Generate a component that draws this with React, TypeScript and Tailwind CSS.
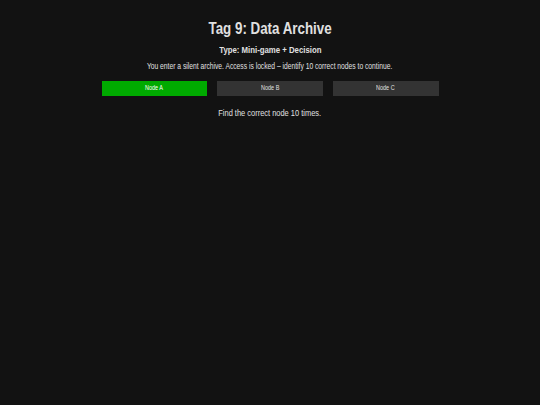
import React from "react";

function T({ children }: { children: React.ReactNode }) {
  return <span className="inline-block scale-x-[0.82] whitespace-nowrap">{children}</span>;
}

export default function App() {
  return (
    <div className="min-h-[405px] w-full bg-[#121212] text-[#e0e0e0]" style={{ fontFamily: '"Liberation Sans", Arial, sans-serif' }}>
      <div className="mx-auto flex w-[337px] flex-col items-center pt-[19px] text-center">
        <h1 className="text-[16.3px] font-bold leading-[18px]"><T>Tag 9: Data Archive</T></h1>
        <h2 className="mt-[7px] text-[9.5px] font-bold leading-[11px]"><T>Type: Mini-game + Decision</T></h2>
        <p className="mt-[6.7px] text-[8.2px] leading-[10px]"><T>You enter a silent archive. Access is locked – identify 10 correct nodes to continue.</T></p>
        <div className="mt-[9.6px] flex w-full gap-[10px]">
          <button className="h-[14.5px] flex-1 bg-[#00aa00] text-[6.7px] leading-[14.5px] text-white"><T>Node A</T></button>
          <button className="h-[14.5px] flex-1 bg-[#333333] text-[6.7px] leading-[14.5px] text-[#e0e0e0]"><T>Node B</T></button>
          <button className="h-[14.5px] flex-1 bg-[#333333] text-[6.7px] leading-[14.5px] text-[#e0e0e0]"><T>Node C</T></button>
        </div>
        <p className="mt-[12.5px] text-[9.1px] leading-[11px]"><T>Find the correct node 10 times.</T></p>
      </div>
    </div>
  );
}
